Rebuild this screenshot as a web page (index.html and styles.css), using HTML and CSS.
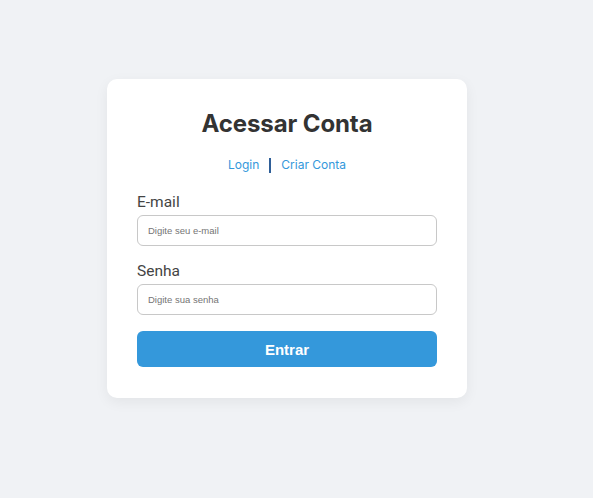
FILE: index.html
```html
<!DOCTYPE html>
<html lang="pt-BR">
<head>
<meta charset="utf-8">
<title>Acessar Conta</title>
<link rel="stylesheet" href="styles.css">
</head>
<body>
<main class="page">
  <section class="card">
    <h1 class="title">Acessar Conta</h1>
    <nav class="tabs">
      <a class="tab" href="#">Login</a>
      <span class="sep" aria-hidden="true"></span>
      <a class="tab" href="#">Criar Conta</a>
    </nav>
    <form class="form">
      <label class="label" for="email">E-mail</label>
      <input class="input" id="email" type="email" placeholder="Digite seu e-mail">
      <label class="label label-gap" for="senha">Senha</label>
      <input class="input" id="senha" type="password" placeholder="Digite sua senha">
      <button class="btn" type="button">Entrar</button>
    </form>
  </section>
</main>
</body>
</html>
```
FILE: styles.css
```css
html, body {
  margin: 0;
  padding: 0;
  background: #f0f2f5;
  font-family: Inter, "Liberation Sans", sans-serif;
}
.page {
  min-height: 498px;
  box-sizing: border-box;
  padding: 79px 0 0 107px;
}
.card {
  width: 360px;
  box-sizing: border-box;
  background: #fff;
  border-radius: 10px;
  padding: 30px 30px 31px;
  box-shadow: 0 4px 14px rgba(0, 0, 0, 0.06);
}
.title {
  margin: 0;
  text-align: center;
  font-size: 24px;
  line-height: 29px;
  font-weight: 700;
  color: #333;
  letter-spacing: -0.1px;
}
.tabs {
  margin-top: 19px;
  display: flex;
  justify-content: center;
  align-items: center;
  gap: 10px;
  font-size: 12px;
  line-height: 16px;
}
.tab {
  color: #3498db;
  text-decoration: none;
}
.sep {
  display: block;
  width: 2px;
  height: 15px;
  background: #2f5f98;
}
.form {
  display: flex;
  flex-direction: column;
  margin-top: 20px;
}
.label {
  font-family: Roboto, "Liberation Sans", sans-serif;
  font-size: 15.5px;
  line-height: 18px;
  color: #444;
  margin-bottom: 4px;
}
.label-gap {
  margin-top: 16px;
}
.input {
  height: 31px;
  box-sizing: border-box;
  border: 1px solid #c8c8c8;
  border-radius: 6px;
  padding: 0 10px;
  font-family: "Liberation Sans", Arial, sans-serif;
  font-size: 9.5px;
  color: #333;
  outline: none;
}
.input::placeholder {
  color: #757575;
}
.btn {
  margin-top: 16px;
  height: 36px;
  border: none;
  border-radius: 6px;
  background: #3498db;
  color: #fff;
  font-family: "Liberation Sans", Arial, sans-serif;
  font-weight: 700;
  font-size: 15px;
  cursor: pointer;
}
```
